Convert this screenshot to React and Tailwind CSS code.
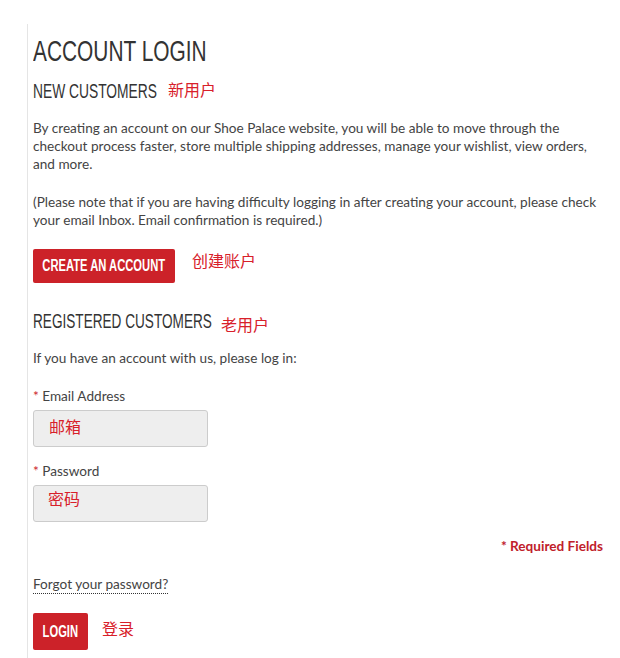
export default function App() {
  const body = { fontFamily: '"Lato", "Noto Sans CJK SC", sans-serif' };
  const narrow = { fontFamily: '"Liberation Sans", "Noto Sans CJK SC", sans-serif' };
  const cjk = { fontFamily: '"Noto Sans CJK SC", sans-serif' };
  return (
    <div className="w-[620px] h-[658px] bg-white overflow-hidden">
      <div className="ml-[27px] mt-[24px] border-l border-[#e5e5e5] pl-[5px] pr-[17px] h-[634px] text-[#444] text-[13.6px] leading-[18px]" style={body}>
        <h1 className="pt-[10px] h-[44px] text-[29px] leading-[34px] text-[#333] whitespace-nowrap" style={narrow}>
          <span className="inline-block origin-left scale-x-[0.72]">ACCOUNT LOGIN</span>
        </h1>
        <div className="mt-[12px] flex items-baseline h-[22px]">
          <h2 className="w-[124px] text-[20px] leading-[22px] text-[#333] whitespace-nowrap" style={narrow}>
            <span className="inline-block origin-left scale-x-[0.69]">NEW CUSTOMERS</span>
          </h2>
          <span className="ml-[11px] text-[16px] text-[#d8202a] relative top-[-2px]" style={cjk}>新用户</span>
        </div>
        <p className="mt-[17px]">By creating an account on our Shoe Palace website, you will be able to move through the checkout process faster, store multiple shipping addresses, manage your wishlist, view orders, and more.</p>
        <p className="mt-[20px]">(Please note that if you are having difficulty logging in after creating your account, please check your email Inbox. Email confirmation is required.)</p>
        <div className="mt-[20px] flex items-start">
          <button className="h-[34px] w-[142px] rounded-[2px] bg-[#cc2229] text-white text-[16px] font-bold whitespace-nowrap flex items-center justify-center" style={narrow}>
            <span className="inline-block shrink-0 scale-x-[0.70]">CREATE AN ACCOUNT</span>
          </button>
          <span className="ml-[17px] mt-[1px] text-[16px] leading-[20px] text-[#d8202a]" style={cjk}>创建账户</span>
        </div>
        <div className="mt-[25px] flex items-end h-[24px]">
          <h2 className="w-[178px] text-[20px] leading-[22px] text-[#333] whitespace-nowrap" style={narrow}>
            <span className="inline-block origin-left scale-x-[0.68]">REGISTERED CUSTOMERS</span>
          </h2>
          <span className="ml-[10px] mb-[-2px] text-[16px] leading-[20px] text-[#d8202a]" style={cjk}>老用户</span>
        </div>
        <p className="mt-[17px]">If you have an account with us, please log in:</p>
        <label className="block mt-[20px]"><span className="text-[#cc2229]">*</span> Email Address</label>
        <div className="mt-[5px] w-[175px] h-[37px] bg-[#eeeeee] border border-[#cccccc] rounded-[3px] pl-[15px] pt-[4px] text-[16px] leading-[22px] text-[#d8202a]" style={cjk}>邮箱</div>
        <label className="block mt-[15px]"><span className="text-[#cc2229]">*</span> Password</label>
        <div className="mt-[5px] w-[175px] h-[37px] bg-[#eeeeee] border border-[#cccccc] rounded-[3px] pl-[14px] pt-[1px] text-[16px] leading-[22px] text-[#d8202a]" style={cjk}>密码</div>
        <div className="mt-[15px] text-right font-bold text-[#c0202a]">* Required Fields</div>
        <div className="mt-[20px]">
          <a className="text-[#444] border-b border-dotted border-[#333] pb-[1px]">Forgot your password?</a>
        </div>
        <div className="mt-[20px] flex items-center">
          <button className="h-[37px] w-[55px] rounded-[2px] bg-[#cc2229] text-white text-[16px] font-bold whitespace-nowrap flex items-center justify-center" style={narrow}>
            <span className="inline-block shrink-0 scale-x-[0.70]">LOGIN</span>
          </button>
          <span className="ml-[14px] mt-[-8px] text-[16px] text-[#d8202a]" style={cjk}>登录</span>
        </div>
      </div>
    </div>
  );
}
